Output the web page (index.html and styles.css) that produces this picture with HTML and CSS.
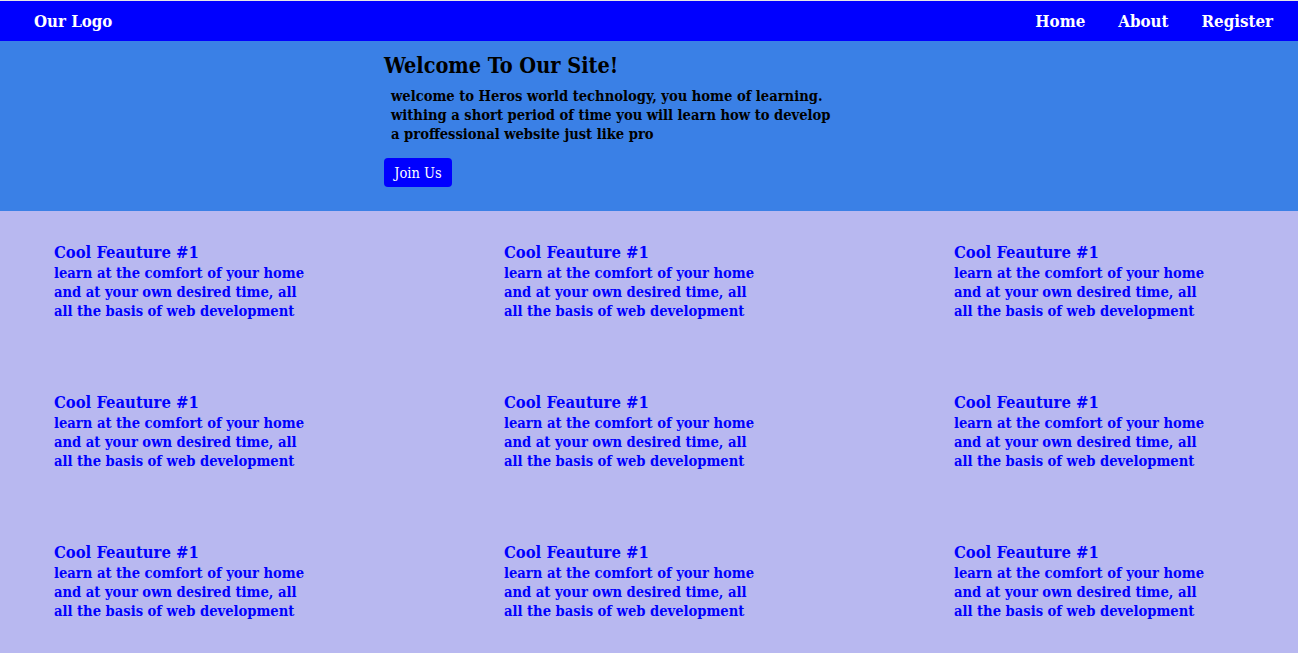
FILE: index.html
```html
<!DOCTYPE html>
<html lang="en">
<head>
<meta charset="utf-8">
<title>Our Logo</title>
<link rel="stylesheet" href="styles.css">
</head>
<body>
<nav class="topbar">
  <div class="logo">Our Logo</div>
  <ul class="links">
    <li>Home</li>
    <li>About</li>
    <li>Register</li>
  </ul>
</nav>
<section class="hero">
  <h1 class="hero-title">Welcome To Our Site!</h1>
  <p class="hero-text">welcome to Heros world technology, you home of learning.<br>withing a short period of time you will learn how to develop<br>a proffessional website just like pro</p>
  <button class="join">Join Us</button>
</section>
<section class="features">
  <div class="card"><h3>Cool Feauture #1</h3><p>learn at the comfort of your home<br>and at your own desired time, all<br>all the basis of web development</p></div>
  <div class="card"><h3>Cool Feauture #1</h3><p>learn at the comfort of your home<br>and at your own desired time, all<br>all the basis of web development</p></div>
  <div class="card"><h3>Cool Feauture #1</h3><p>learn at the comfort of your home<br>and at your own desired time, all<br>all the basis of web development</p></div>
  <div class="card"><h3>Cool Feauture #1</h3><p>learn at the comfort of your home<br>and at your own desired time, all<br>all the basis of web development</p></div>
  <div class="card"><h3>Cool Feauture #1</h3><p>learn at the comfort of your home<br>and at your own desired time, all<br>all the basis of web development</p></div>
  <div class="card"><h3>Cool Feauture #1</h3><p>learn at the comfort of your home<br>and at your own desired time, all<br>all the basis of web development</p></div>
  <div class="card"><h3>Cool Feauture #1</h3><p>learn at the comfort of your home<br>and at your own desired time, all<br>all the basis of web development</p></div>
  <div class="card"><h3>Cool Feauture #1</h3><p>learn at the comfort of your home<br>and at your own desired time, all<br>all the basis of web development</p></div>
  <div class="card"><h3>Cool Feauture #1</h3><p>learn at the comfort of your home<br>and at your own desired time, all<br>all the basis of web development</p></div>
</section>
</body>
</html>
```
FILE: styles.css
```css
* { box-sizing: border-box; }
html, body { margin: 0; padding: 0; }
body {
  font-family: "DejaVu Serif Condensed", "DejaVu Serif", serif;
  font-weight: bold;
  background: #b8b8f0;
  border-top: 1px solid #e6e6e6;
}
.topbar {
  height: 40px;
  background: #0000ff;
  display: flex;
  align-items: center;
  justify-content: space-between;
  padding: 0 25px 0 34px;
  color: #fff;
}
.logo { font-size: 16.7px; }
.links {
  list-style: none;
  margin: 0;
  padding: 0;
  display: flex;
  gap: 33px;
  font-size: 16.8px;
}
.hero {
  height: 170px;
  background: #3a80e6;
  padding: 11px 0 0 384px;
  color: #000;
}
.hero-title {
  margin: 0;
  font-size: 21.5px;
  line-height: 28px;
}
.hero-text {
  margin: 6px 0 0 7px;
  font-size: 14.6px;
  line-height: 19px;
}
.join {
  margin-top: 15px;
  height: 29px;
  width: 68px;
  padding: 0;
  border: none;
  border-radius: 4px;
  background: #0000ff;
  color: #fff;
  font-family: inherit;
  font-weight: normal;
  font-size: 14.5px;
}
.features {
  display: grid;
  grid-template-columns: repeat(3, 290px);
  column-gap: 160px;
  row-gap: 72px;
  padding: 31px 0 40px 54px;
  color: #0000ff;
}
.card h3 {
  margin: 0;
  font-size: 16.5px;
  line-height: 21px;
}
.card p {
  margin: 0;
  font-size: 14.6px;
  line-height: 19px;
}
```
